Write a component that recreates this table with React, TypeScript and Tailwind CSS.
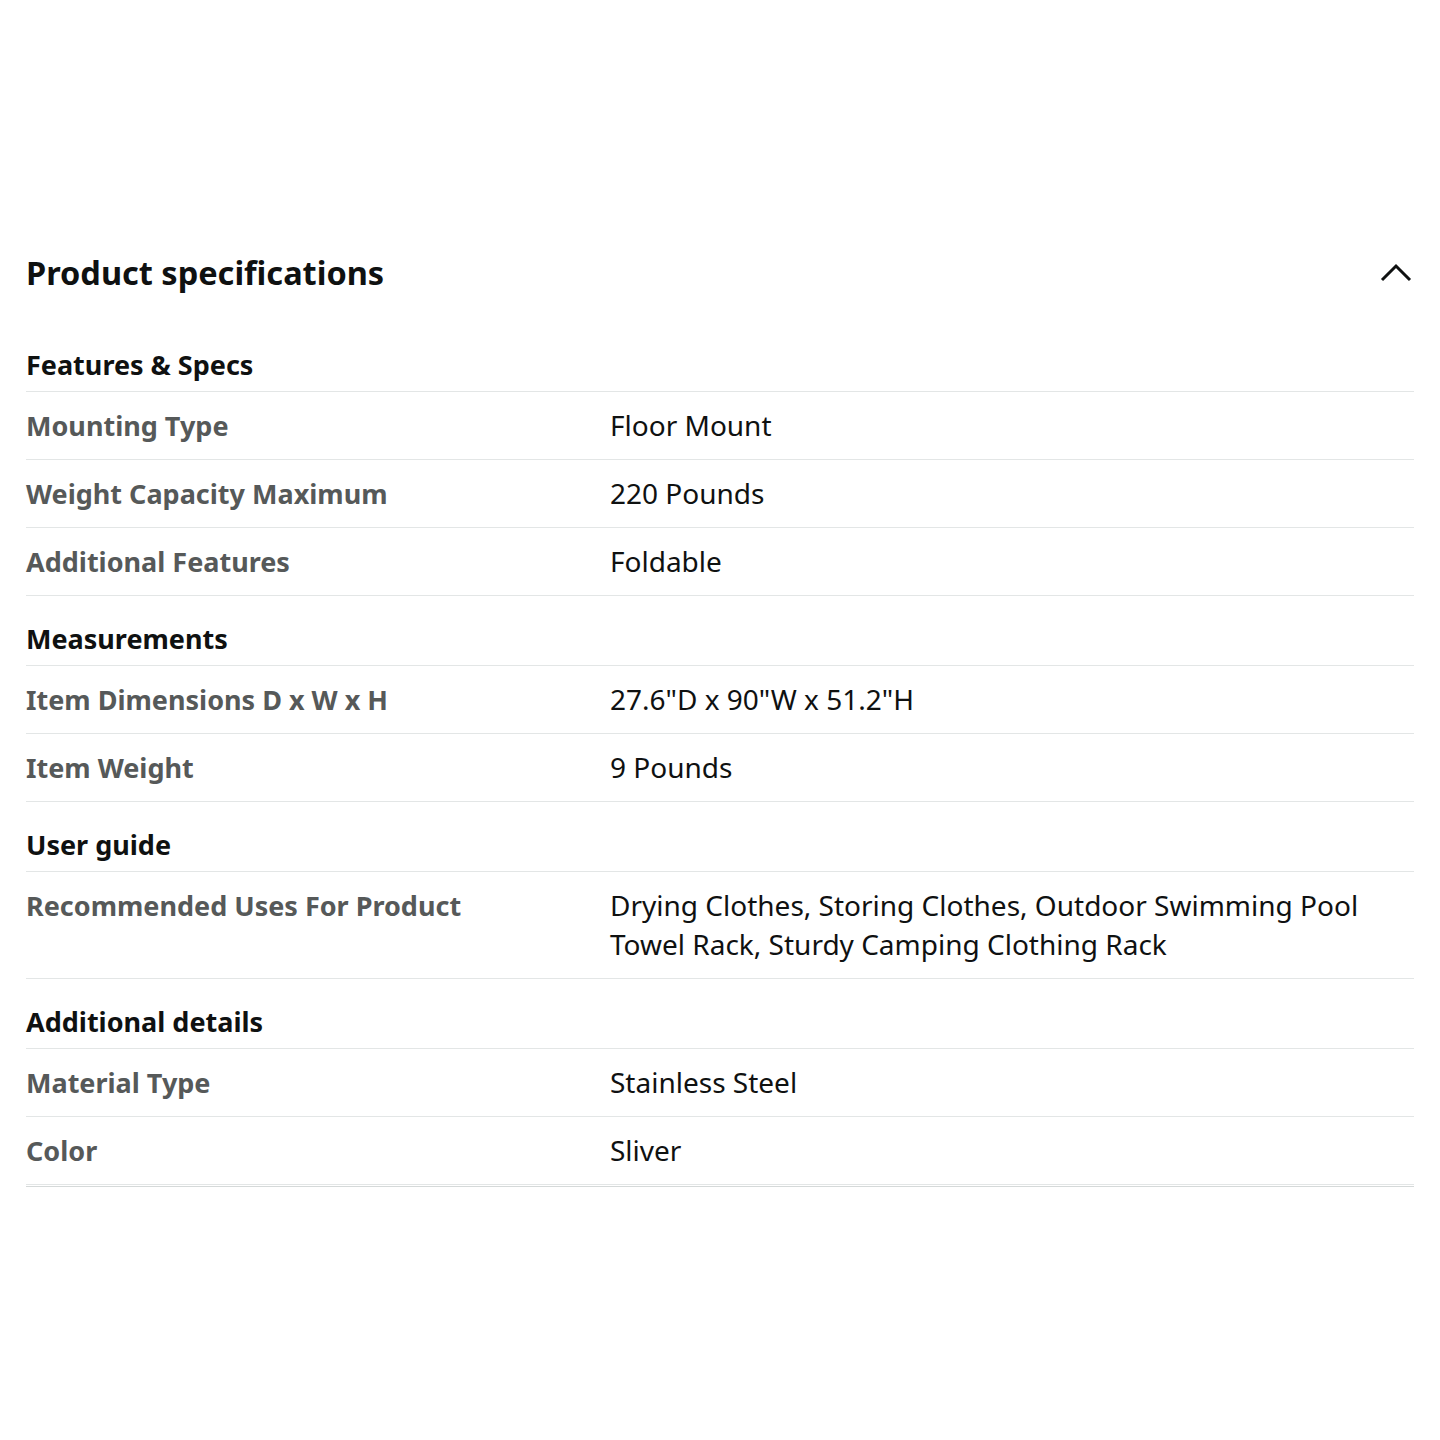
import React from "react";

type Row = { label: string; value: string[] };
type Section = { title: string; rows: Row[] };

const sections: Section[] = [
  {
    title: "Features & Specs",
    rows: [
      { label: "Mounting Type", value: ["Floor Mount"] },
      { label: "Weight Capacity Maximum", value: ["220 Pounds"] },
      { label: "Additional Features", value: ["Foldable"] },
    ],
  },
  {
    title: "Measurements",
    rows: [
      { label: "Item Dimensions D x W x H", value: ['27.6"D x 90"W x 51.2"H'] },
      { label: "Item Weight", value: ["9 Pounds"] },
    ],
  },
  {
    title: "User guide",
    rows: [
      {
        label: "Recommended Uses For Product",
        value: ["Drying Clothes, Storing Clothes, Outdoor Swimming Pool", "Towel Rack, Sturdy Camping Clothing Rack"],
      },
    ],
  },
  {
    title: "Additional details",
    rows: [
      { label: "Material Type", value: ["Stainless Steel"] },
      { label: "Color", value: ["Sliver"] },
    ],
  },
];

export default function App() {
  return (
    <div
      className="w-[1440px] h-[1440px] bg-white px-[26px] pt-[249px]"
      style={{ fontFamily: '"Noto Sans", "Open Sans", sans-serif' }}
    >
      <div className="flex items-center justify-between h-[48px]">
        <h2 className="text-[32.5px] leading-[48px] font-bold text-[#0f1111]">Product specifications</h2>
        <svg width="32" height="20" viewBox="0 0 32 20" className="mr-[2px]">
          <path d="M2 17 L16 3 L30 17" fill="none" stroke="#0f1111" strokeWidth="3" />
        </svg>
      </div>
      <div className="border-b border-[#d5d9d9] pb-[1px]">
        {sections.map((s, i) => (
          <div key={s.title}>
            <div
              className={`${i === 0 ? "pt-[52px]" : "pt-[27px]"} pb-[10px] border-b border-[#e3e6e6] text-[27px] leading-[32px] font-bold text-[#0f1111]`}
            >
              {s.title}
            </div>
            {s.rows.map((r) => (
              <div key={r.label} className="flex border-b border-[#e3e6e6] py-[14px]">
                <div className="w-[584px] shrink-0 text-[27px] leading-[39px] font-bold text-[#565959]">
                  {r.label}
                </div>
                <div className="text-[28px] leading-[39px] text-[#0f1111]">
                  {r.value.map((v) => (
                    <div key={v}>{v}</div>
                  ))}
                </div>
              </div>
            ))}
          </div>
        ))}
      </div>
    </div>
  );
}
